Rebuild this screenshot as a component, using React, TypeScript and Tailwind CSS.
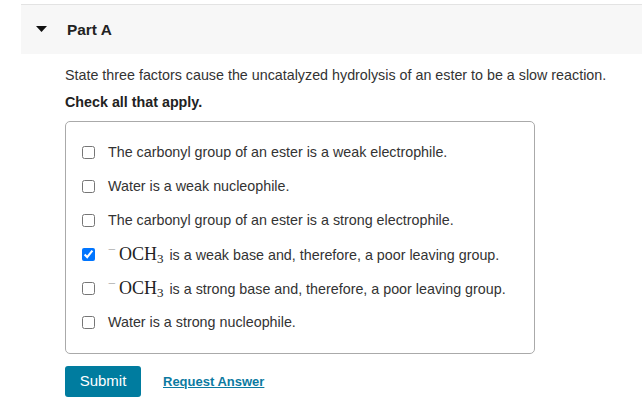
import { useState } from 'react';

const options = [
  { id: 'a', label: 'The carbonyl group of an ester is a weak electrophile.' },
  { id: 'b', label: 'Water is a weak nucleophile.' },
  { id: 'c', label: 'The carbonyl group of an ester is a strong electrophile.' },
  { id: 'd', label: 'is a weak base and, therefore, a poor leaving group.', ion: true },
  { id: 'e', label: 'is a strong base and, therefore, a poor leaving group.', ion: true },
  { id: 'f', label: 'Water is a strong nucleophile.' },
];

function Methoxide() {
  return (
    <span className="mr-[6px] inline-flex items-baseline font-['Liberation_Serif',serif] text-[18px] leading-none text-[#222]">
      <span className="relative -top-[6px] mr-[3px] text-[14px] leading-none text-[#aaa]">−</span>
      OCH<span className="relative top-[3px] text-[13px] leading-none">3</span>
    </span>
  );
}

export default function App() {
  const [checked, setChecked] = useState<Record<string, boolean>>({ d: true });

  return (
    <div className="h-[415px] w-[642px] bg-white pt-[4px] pl-[21px] font-['Liberation_Sans',Arial,sans-serif] text-[#333]">
      <div className="flex h-[50px] items-center border-t border-[#e3e3e3] bg-[#f7f7f7]">
        <svg width="11" height="6" viewBox="0 0 11 6" className="ml-[15px] mt-[-1px]">
          <path d="M0 0h11L5.5 6z" fill="#111" />
        </svg>
        <span className="ml-[20px] text-[15.4px] font-bold text-[#222]">Part A</span>
      </div>

      <div className="pl-[44px]">
        <p className="mt-[13px] text-[14.3px] leading-[17px]">
          State three factors cause the uncatalyzed hydrolysis of an ester to be a slow reaction.
        </p>
        <p className="mt-[10px] text-[14.3px] font-bold leading-[17px] text-[#222]">Check all that apply.</p>

        <div className="mt-[10px] flex h-[233px] w-[470px] flex-col rounded-[5px] border border-[#aaa] pt-[13px]">
          {options.map((o) => (
            <label key={o.id} className="flex h-[34px] items-center pl-[16px] text-[14.3px] leading-[17px]">
              <input
                type="checkbox"
                checked={!!checked[o.id]}
                onChange={() => setChecked({ ...checked, [o.id]: !checked[o.id] })}
                className="m-0 h-[13px] w-[13px]"
              />
              <span className="ml-[13px] flex items-baseline">
                {o.ion && <Methoxide />}
                {o.label}
              </span>
            </label>
          ))}
        </div>

        <div className="mt-[12px] flex items-center">
          <button className="h-[31px] w-[76px] rounded-[3px] bg-[#007c9f] text-[15px] text-white">Submit</button>
          <a href="#" className="ml-[22px] text-[13px] font-bold text-[#0b7aa1] underline">
            Request Answer
          </a>
        </div>
      </div>
    </div>
  );
}
